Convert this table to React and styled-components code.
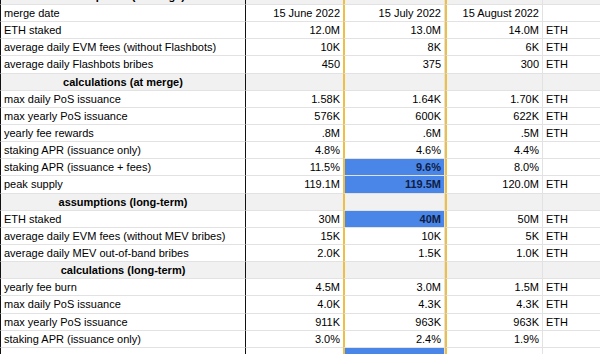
import React from 'react'
import styled, { createGlobalStyle } from 'styled-components'

const rows = [
  { section: 'assumptions (at merge)' },
  { label: 'merge date', values: ['15 June 2022', '15 July 2022', '15 August 2022'], unit: '' },
  { label: 'ETH staked', values: ['12.0M', '13.0M', '14.0M'], unit: 'ETH' },
  { label: 'average daily EVM fees (without Flashbots)', values: ['10K', '8K', '6K'], unit: 'ETH' },
  { label: 'average daily Flashbots bribes', values: ['450', '375', '300'], unit: 'ETH' },
  { section: 'calculations (at merge)' },
  { label: 'max daily PoS issuance', values: ['1.58K', '1.64K', '1.70K'], unit: 'ETH' },
  { label: 'max yearly PoS issuance', values: ['576K', '600K', '622K'], unit: 'ETH' },
  { label: 'yearly fee rewards', values: ['.8M', '.6M', '.5M'], unit: 'ETH' },
  { label: 'staking APR (issuance only)', values: ['4.8%', '4.6%', '4.4%'], unit: '' },
  { label: 'staking APR (issuance + fees)', values: ['11.5%', '9.6%', '8.0%'], unit: '', picked: true },
  { label: 'peak supply', values: ['119.1M', '119.5M', '120.0M'], unit: 'ETH', picked: true },
  { section: 'assumptions (long-term)' },
  { label: 'ETH staked', values: ['30M', '40M', '50M'], unit: 'ETH', picked: true },
  { label: 'average daily EVM fees (without MEV bribes)', values: ['15K', '10K', '5K'], unit: 'ETH' },
  { label: 'average daily MEV out-of-band bribes', values: ['2.0K', '1.5K', '1.0K'], unit: 'ETH' },
  { section: 'calculations (long-term)' },
  { label: 'yearly fee burn', values: ['4.5M', '3.0M', '1.5M'], unit: 'ETH' },
  { label: 'max daily PoS issuance', values: ['4.0K', '4.3K', '4.3K'], unit: 'ETH' },
  { label: 'max yearly PoS issuance', values: ['911K', '963K', '963K'], unit: 'ETH' },
  { label: 'staking APR (issuance only)', values: ['3.0%', '2.4%', '1.9%'], unit: '' },
  { label: '', values: ['', '', ''], unit: '', picked: true },
]

const App = () => {
  return (
    <>
      <GlobalStyle />
      <Sheet>
        {rows.map((row, i) =>
          row.section ? (
            <React.Fragment key={i}>
              <SectionCell>{row.section}</SectionCell>
              <BlankCell $col={1} $shade />
              <BlankCell $col={2} $shade />
              <BlankCell $col={3} $shade />
              <BlankCell $col={4} $shade />
            </React.Fragment>
          ) : (
            <React.Fragment key={i}>
              <LabelCell>{row.label}</LabelCell>
              <ValueCell $col={1}>{row.values[0]}</ValueCell>
              <ValueCell $col={2} $picked={row.picked}>{row.values[1]}</ValueCell>
              <ValueCell $col={3}>{row.values[2]}</ValueCell>
              <UnitCell>{row.unit}</UnitCell>
            </React.Fragment>
          )
        )}
      </Sheet>
    </>
  )
}

const GlobalStyle = createGlobalStyle`
  body {
    margin: 0;
    height: 354px;
    overflow: hidden;
    background: #ffffff;
    font-family: "Liberation Sans", Arial, sans-serif;
  }
`

// sheet is scrolled a little, so the first section row is cut at the top
const Sheet = styled.div`
  display: grid;
  grid-template-columns: 246px 97px 102px 98px 1fr;
  grid-auto-rows: 17.15px;
  margin-top: -12.15px;
  width: 600px;
  font-size: 11px;
  color: #000;
`

const yellow = '#efbf45'
const grid = '#e2e2e2'

const Cell = styled.div`
  box-sizing: border-box;
  border-bottom: 1px solid ${grid};
  line-height: 16px;
  white-space: nowrap;
  overflow: hidden;
  padding: 0 3px;
`

const LabelCell = styled(Cell)`
  border-left: 1px solid #111;
  border-right: 1px solid #111;
`

const SectionCell = styled(LabelCell)`
  background: #f1f1f1;
  font-weight: bold;
  text-align: center;
`

// the July column is framed in yellow
const colBorders = ({ $col }) =>
  $col === 2 || $col === 3
    ? `border-left: 2px solid ${yellow}; border-right: 1px solid ${grid};`
    : ''

const ValueCell = styled(Cell)`
  text-align: right;
  ${colBorders}
  background: ${({ $picked }) => ($picked ? '#4a86e8' : 'transparent')};
  font-weight: ${({ $picked }) => ($picked ? 'bold' : 'normal')};
  color: ${({ $picked }) => ($picked ? '#0f1d45' : '#000')};
`

const BlankCell = styled(Cell)`
  ${colBorders}
  background: ${({ $shade }) => ($shade ? '#f1f1f1' : 'transparent')};
`

const UnitCell = styled(Cell)`
  text-align: left;
`

export default App
